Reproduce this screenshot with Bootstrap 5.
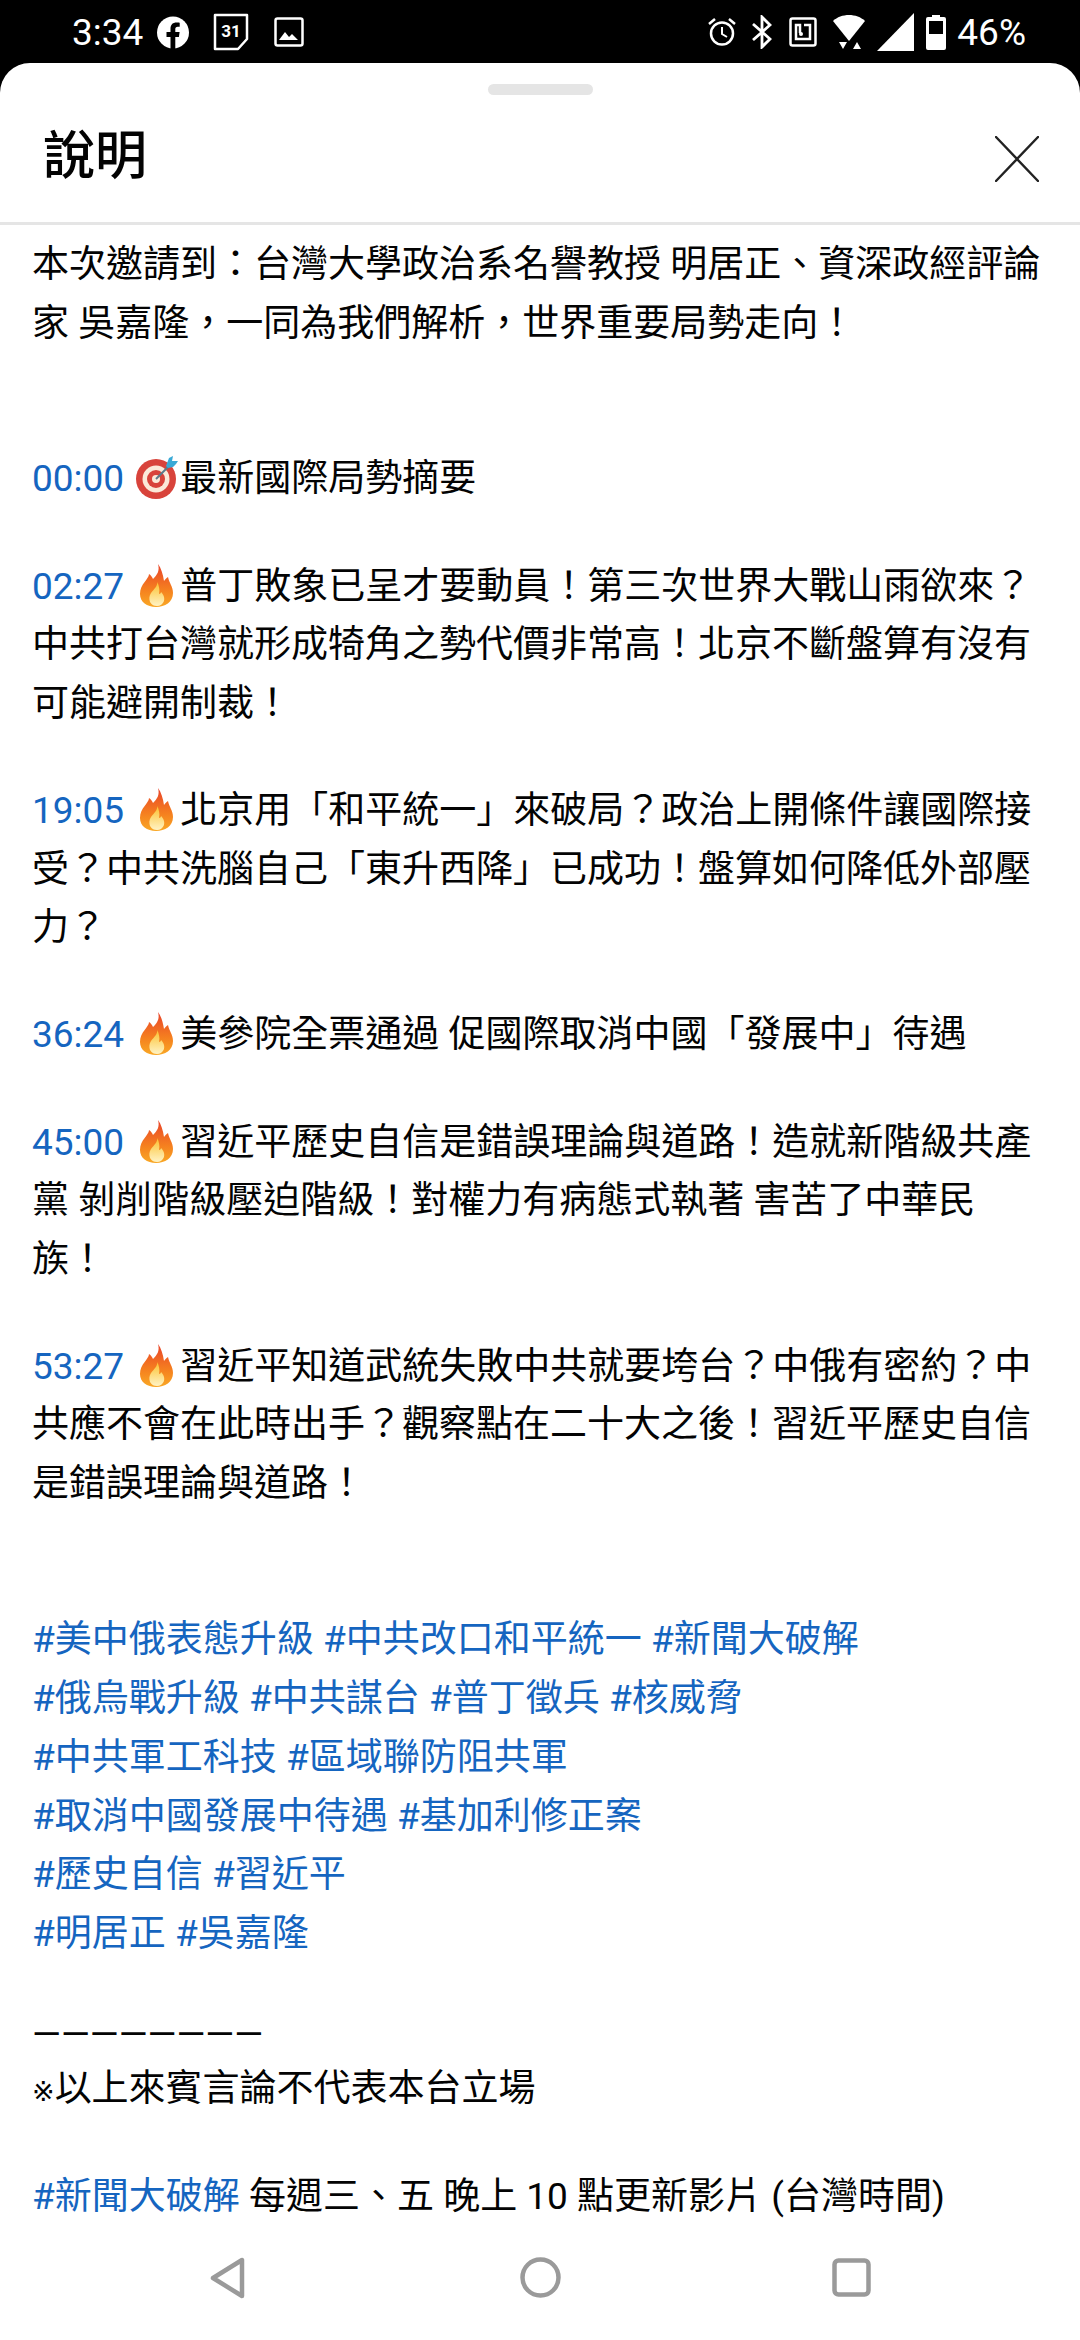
<!DOCTYPE html>
<html lang="zh-Hant">
<head>
    <meta charset="UTF-8">
    <meta name="viewport" content="width=device-width, initial-scale=1.0">
    <title>說明</title>
    <link rel="stylesheet" href="https://cdn.jsdelivr.net/npm/bootstrap@5.3.0/dist/css/bootstrap.min.css">
    <style>
        html, body {
            height: 2340px;
            overflow: hidden;
        }
        body {
            background-color: #000;
            font-family: Roboto, "Noto Sans CJK TC", sans-serif;
            color: #030303;
        }
        .status-bar {
            height: 63px;
            padding: 1px 54px 0 72px;
            color: #fff;
            font-size: 37px;
            line-height: 1;
        }
        .st-fb { margin-left: 14px; }
        .st-cal { margin-left: 24px; }
        .st-img { margin-left: 25px; }
        .st-bt { margin-left: 16px; }
        .st-nfc { margin-left: 17px; }
        .st-wifi { margin-left: 16px; }
        .st-sig { margin-left: 12px; }
        .st-bat { margin-left: 12px; }
        .st-pct { margin-left: 11px; }
        .sheet {
            flex: 1 1 auto;
            min-height: 0;
            background: #fff;
            border-radius: 30px 30px 0 0;
        }
        .handle {
            width: 105px;
            height: 11px;
            margin: 21px auto 0;
            background: #e5e5e5;
            border-radius: 6px;
        }
        .sheet-head {
            height: 130px;
            padding: 0 41px 0 43px;
            border-bottom: 3px solid #e5e5e5;
        }
        .sheet-title {
            font-size: 52px;
            margin: 0 0 3px;
            font-weight: 500;
            color: #030303;
        }
        .desc {
            flex: 1 1 auto;
            min-height: 0;
            overflow: hidden;
            padding: 11px 0 0 32px;
            font-size: 37px;
            line-height: 58.6px;
            white-space: nowrap;
        }
        .desc p {
            margin: 0 0 48.6px;
        }
        .desc p.gap-two {
            margin-bottom: 97.2px;
        }
        .desc p.tags {
            line-height: 58.9px;
            margin: 0;
        }
        .desc p.dashes {
            line-height: 50.6px;
            margin: 0;
        }
        .desc p.spacer {
            height: 45.5px;
            margin: 0;
        }
        .desc a {
            color: #1565c0;
            text-decoration: none;
        }
        .ref-mark {
            font-family: "DejaVu Sans", sans-serif;
            font-size: 27px;
            line-height: 1;
        }
        .emo {
            width: 47px;
            height: 44px;
            vertical-align: -8px;
        }
        .nav-keys {
            height: 113px;
            background: #fff;
        }
        .key-back { left: 209px; top: 30px; }
        .key-home { left: 520px; top: 30px; }
        .key-recent { left: 832px; top: 31px; }
    </style>
</head>
<body>
<svg width="0" height="0" class="position-absolute">
    <defs>
        <linearGradient id="fireOuter" x1="0" y1="0" x2="0" y2="1">
            <stop offset="0" stop-color="#e8432a"/>
            <stop offset="0.6" stop-color="#f5801f"/>
            <stop offset="1" stop-color="#f9a825"/>
        </linearGradient>
        <linearGradient id="fireInner" x1="0" y1="0" x2="0" y2="1">
            <stop offset="0" stop-color="#fbc02d"/>
            <stop offset="1" stop-color="#fff3c4"/>
        </linearGradient>
        <symbol id="fire" viewBox="0 0 47 44">
            <path fill="url(#fireOuter)" d="M25 1c2 7-1 11-5 15-1-2-2-4-4-5 0 5-9 10-9 20 0 8 7 13 16 13s17-5 17-14c0-7-4-10-5-16-2 1-3 3-4 4-1-7-3-13-6-17z"/>
            <path fill="url(#fireInner)" d="M24 19c1 4-3 7-6 11-2 3-2 6-1 9 2 3 4 4 7 4s6-2 7-5c1-4-1-7-3-9 0 1-1 2-2 2 1-4 0-9-2-12z"/>
        </symbol>
        <symbol id="target" viewBox="0 0 47 44">
            <circle cx="23" cy="24" r="20" fill="#d8433b"/>
            <circle cx="23" cy="24" r="13.5" fill="#fbe9d9"/>
            <circle cx="23" cy="24" r="9" fill="#d8433b"/>
            <circle cx="23" cy="24" r="4" fill="#fbe9d9"/>
            <path d="M23 24 35 12" stroke="#5b7a8c" stroke-width="2" fill="none"/>
            <path fill="#39a9d6" d="M33 11l3-8 4-2-1 5 6 0-2 3-3 3-5 1z"/>
        </symbol>
    </defs>
</svg>

<div class="d-flex flex-column vh-100">
    <div class="status-bar d-flex align-items-center justify-content-between flex-shrink-0">
        <div class="d-flex align-items-center">
            <span>3:34</span>
            <svg class="st-fb" width="32" height="33" viewBox="0 0 32 33"><circle cx="16" cy="16.5" r="16" fill="#fff"/><path fill="#000" d="M13.500 33V21H9.500v-5h4v-3.400c0-4 2.400-6.100 6-6.100 1.700 0 3.200.2 3.200.2v4h-1.900c-1.900 0-2.500 1.200-2.500 2.400V16h4.300l-.7 5h-3.600v12z"/></svg>
            <svg class="st-cal" width="36" height="38" viewBox="0 0 36 38"><path fill="none" stroke="#fff" stroke-width="2.500" stroke-linejoin="round" d="M2 2h32v24l-9 10H2z"/><text x="18" y="24" text-anchor="middle" fill="#fff" font-family="Roboto" font-weight="700" font-size="17">31</text></svg>
            <svg class="st-img" width="30" height="30" viewBox="0 0 30 30"><rect x="1.500" y="1.500" width="27" height="27" rx="2" fill="none" stroke="#fff" stroke-width="2.500"/><path fill="#fff" d="M5 23l6-8 4 5 3-3 6 6z"/></svg>
        </div>
        <div class="d-flex align-items-center">
            <svg width="28" height="30" viewBox="0 0 28 30"><circle cx="14" cy="16.500" r="11" fill="none" stroke="#fff" stroke-width="2.500"/><path d="M14 10v7l5 3" fill="none" stroke="#fff" stroke-width="2"/><path d="M1 7l6-5M27 7l-6-5" stroke="#fff" stroke-width="2.500"/></svg>
            <svg class="st-bt" width="20" height="34" viewBox="0 0 20 34"><path fill="none" stroke="#fff" stroke-width="2.800" d="M1 9l17 15-8 8V2l8 8L1 25"/></svg>
            <svg class="st-nfc" width="28" height="30" viewBox="0 0 28 30"><rect x="1.500" y="1.500" width="25" height="27" rx="2" fill="none" stroke="#fff" stroke-width="2.500"/><path fill="none" stroke="#fff" stroke-width="2.500" d="M15 8h6v14H7V8h4v8"/><circle cx="12" cy="17" r="2" fill="#fff"/></svg>
            <svg class="st-wifi" width="32" height="35" viewBox="0 0 32 35"><path fill="#fff" d="M0 6C4 2 10 0 16 0s12 2 16 6L16 26z"/><path fill="#fff" d="M6 27h8l-4 7zM20 34l4-7 4 7z"/></svg>
            <svg class="st-sig" width="37" height="38" viewBox="0 0 37 38"><path fill="#fff" d="M37 0v38H0z"/></svg>
            <svg class="st-bat" width="20" height="35" viewBox="0 0 20 35"><path fill="#fff" d="M6 0h8v2h4a2 2 0 0 1 2 2v29a2 2 0 0 1-2 2H2a2 2 0 0 1-2-2V4a2 2 0 0 1 2-2h4z"/><rect x="3" y="6" width="14" height="13" fill="#000"/></svg>
            <span class="st-pct">46%</span>
        </div>
    </div>

    <div class="sheet d-flex flex-column">
        <div class="handle flex-shrink-0"></div>
        <div class="sheet-head d-flex align-items-center justify-content-between flex-shrink-0">
            <h1 class="sheet-title">說明</h1>
            <svg width="44" height="46" viewBox="0 0 44 46"><path d="M1 1l42 44M43 1 1 45" stroke="#222" stroke-width="2.400" stroke-linecap="round"/></svg>
        </div>
        <div class="desc">
            <p class="gap-two">本次邀請到：台灣大學政治系名譽教授 明居正、資深政經評論<br>家 吳嘉隆，一同為我們解析，世界重要局勢走向！</p>
            <p><a href="#">00:00</a> <svg class="emo"><use href="#target"/></svg>最新國際局勢摘要</p>
            <p><a href="#">02:27</a> <svg class="emo"><use href="#fire"/></svg>普丁敗象已呈才要動員！第三次世界大戰山雨欲來？<br>中共打台灣就形成犄角之勢代價非常高！北京不斷盤算有沒有<br>可能避開制裁！</p>
            <p><a href="#">19:05</a> <svg class="emo"><use href="#fire"/></svg>北京用「和平統一」來破局？政治上開條件讓國際接<br>受？中共洗腦自己「東升西降」已成功！盤算如何降低外部壓<br>力？</p>
            <p><a href="#">36:24</a> <svg class="emo"><use href="#fire"/></svg>美參院全票通過 促國際取消中國「發展中」待遇</p>
            <p><a href="#">45:00</a> <svg class="emo"><use href="#fire"/></svg>習近平歷史自信是錯誤理論與道路！造就新階級共產<br>黨 剝削階級壓迫階級！對權力有病態式執著 害苦了中華民<br>族！</p>
            <p class="gap-two"><a href="#">53:27</a> <svg class="emo"><use href="#fire"/></svg>習近平知道武統失敗中共就要垮台？中俄有密約？中<br>共應不會在此時出手？觀察點在二十大之後！習近平歷史自信<br>是錯誤理論與道路！</p>
            <p class="tags"><a href="#">#美中俄表態升級</a> <a href="#">#中共改口和平統一</a> <a href="#">#新聞大破解</a><br>
            <a href="#">#俄烏戰升級</a> <a href="#">#中共謀台</a> <a href="#">#普丁徵兵</a> <a href="#">#核威脅</a><br>
            <a href="#">#中共軍工科技</a> <a href="#">#區域聯防阻共軍</a><br>
            <a href="#">#取消中國發展中待遇</a> <a href="#">#基加利修正案</a><br>
            <a href="#">#歷史自信</a> <a href="#">#習近平</a><br>
            <a href="#">#明居正</a> <a href="#">#吳嘉隆</a></p>
            <p class="spacer"></p>
            <p class="dashes">————————</p>
            <p><span class="ref-mark">※</span>以上來賓言論不代表本台立場</p>
            <p class="mb-0"><a href="#">#新聞大破解</a> 每週三、五 晚上 10 點更新影片 (台灣時間)</p>
        </div>
        <div class="nav-keys flex-shrink-0 position-relative">
            <svg class="position-absolute key-back" width="37" height="42" viewBox="0 0 37 42"><path d="M33 3v36L4 21z" fill="none" stroke="#9a9a9a" stroke-width="4.500" stroke-linejoin="round"/></svg>
            <svg class="position-absolute key-home" width="41" height="41" viewBox="0 0 41 41"><circle cx="20.500" cy="20.500" r="18" fill="none" stroke="#9a9a9a" stroke-width="4.500"/></svg>
            <svg class="position-absolute key-recent" width="39" height="39" viewBox="0 0 39 39"><rect x="2.500" y="2.500" width="34" height="34" rx="4" fill="none" stroke="#9a9a9a" stroke-width="4.500"/></svg>
        </div>
    </div>
</div>
</body>
</html>
